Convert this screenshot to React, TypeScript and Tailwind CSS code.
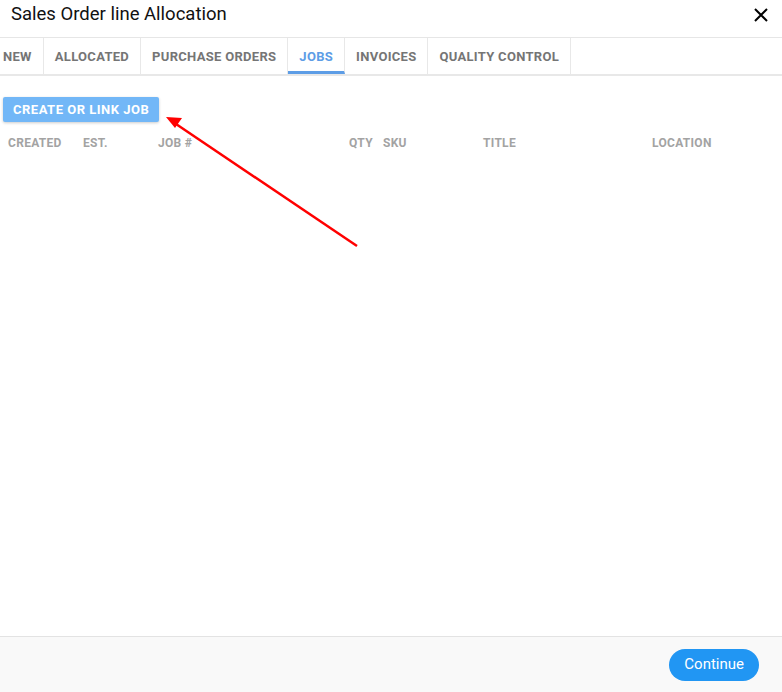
const tabs = ['NEW', 'ALLOCATED', 'PURCHASE ORDERS', 'JOBS', 'INVOICES', 'QUALITY CONTROL'];

const columns = [
  { label: 'CREATED', w: 'w-[75px]' },
  { label: 'EST.', w: 'w-[75px]' },
  { label: 'JOB #', w: 'w-[191px]' },
  { label: 'QTY', w: 'w-[34px]' },
  { label: 'SKU', w: 'w-[100px]' },
  { label: 'TITLE', w: 'w-[169px]' },
  { label: 'LOCATION', w: 'w-[100px]' },
];

export default function App() {
  return (
    <div className="relative flex h-[692px] w-[782px] flex-col overflow-hidden bg-white font-['Roboto',sans-serif]">
      <header className="flex h-[38px] shrink-0 items-center justify-between border-b border-[#e6e6e6] pb-[8px] pl-[11px] pr-[13px]">
        <h1 className="text-[18.5px] leading-none text-[#111]">Sales Order line Allocation</h1>
        <button className="text-black">
          <svg width="16" height="16" viewBox="0 0 16 16" fill="none" stroke="currentColor" strokeWidth="2">
            <path d="M2 2L14 14M14 2L2 14" />
          </svg>
        </button>
      </header>

      <nav className="-ml-[8px] flex h-[38px] shrink-0 border-b-2 border-[#e8e8e8]">
        {tabs.map((t) => (
          <div
            key={t}
            className={`flex items-center border-r border-[#e8e8e8] px-[11px] pt-[1px] text-[13px] font-bold tracking-[0.3px] ${
              t === 'JOBS' ? 'border-b-[3px] border-b-[#5d9de6] pt-[4px] text-[#5d9de6]' : 'text-[#757575]'
            }`}
          >
            {t}
          </div>
        ))}
      </nav>

      <main className="flex-1 px-[3px] pt-[21px]">
        <button className="h-[25px] rounded-[2px] bg-[#72b7f7] px-[10px] text-[13px] font-bold tracking-[0.5px] text-white shadow-[0_1px_3px_rgba(0,0,0,0.2)]">
          CREATE OR LINK JOB
        </button>
        <div className="mt-[12px] flex px-[5px] text-[12px] font-bold tracking-[0.3px] text-[#a3a3a3]">
          {columns.map((c) => (
            <div key={c.label} className={c.w}>
              {c.label}
            </div>
          ))}
        </div>
      </main>

      <footer className="flex h-[56px] shrink-0 items-center justify-end border-t border-[#e3e3e3] bg-[#f9f9f9] pr-[23px]">
        <button className="h-[32px] rounded-full bg-[#2196f3] px-[15px] text-[15px] text-white">Continue</button>
      </footer>

      <svg className="pointer-events-none absolute left-0 top-0" width="782" height="692">
        <line x1="357" y1="246" x2="176" y2="124" stroke="#f00" strokeWidth="2.5" />
        <polygon points="166,117 182,118 175,128" fill="#f00" />
      </svg>
    </div>
  );
}
